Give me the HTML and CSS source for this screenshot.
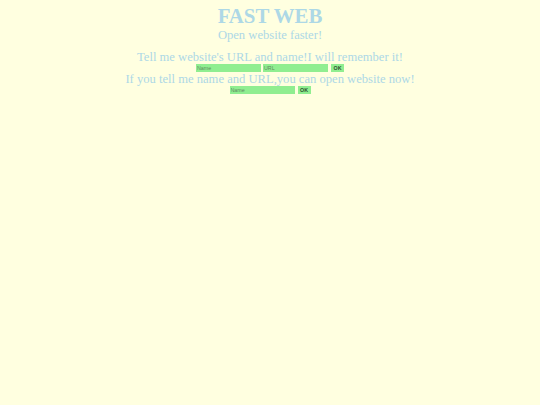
FILE: index.html
```html
<!DOCTYPE html>
<html>
<head>
<meta charset="utf-8">
<link rel="stylesheet" href="styles.css">
</head>
<body>
<div class="page">
  <h1 class="title">FAST WEB</h1>
  <p class="sub">Open website faster!</p>
  <p class="line first">Tell me website's URL and name!I will remember it!</p>
  <div class="row">
    <input class="field" type="text" placeholder="Name">
    <input class="field" type="text" placeholder="URL">
    <button class="ok">OK</button>
  </div>
  <p class="line">If you tell me name and URL,you can open website now!</p>
  <div class="row">
    <input class="field" type="text" placeholder="Name">
    <button class="ok">OK</button>
  </div>
</div>
</body>
</html>
```

FILE: styles.css
```css
html, body {
  margin: 0;
  padding: 0;
  background: #ffffe0;
}
.page {
  padding-top: 4px;
  text-align: center;
  color: #add8e6;
  font-family: "Liberation Serif", "Times New Roman", serif;
}
.title {
  margin: 0;
  font-size: 20.8px;
  font-weight: bold;
  line-height: 24px;
}
.sub {
  margin: 0;
  font-size: 12.6px;
  line-height: 15px;
}
.line {
  margin: 0;
  font-size: 12.6px;
  line-height: 14px;
}
.line.first {
  margin-top: 7px;
}
.row {
  display: flex;
  justify-content: center;
  align-items: center;
  gap: 2px;
  height: 8px;
}
.field {
  box-sizing: border-box;
  width: 65px;
  height: 8px;
  margin: 0;
  padding: 0 1px;
  border: none;
  background: #90ee90;
  font-family: "Liberation Sans", Arial, sans-serif;
  font-size: 5.3px;
  color: #333;
  outline: none;
}
.field::placeholder {
  color: #5f8a5f;
}
.ok {
  box-sizing: border-box;
  width: 13px;
  height: 8px;
  margin: 0 0 0 1px;
  padding: 0;
  border: none;
  background: #90ee90;
  font-family: "Liberation Sans", Arial, sans-serif;
  font-size: 5.3px;
  font-weight: bold;
  color: #2f4f2f;
  line-height: 8px;
}
```
